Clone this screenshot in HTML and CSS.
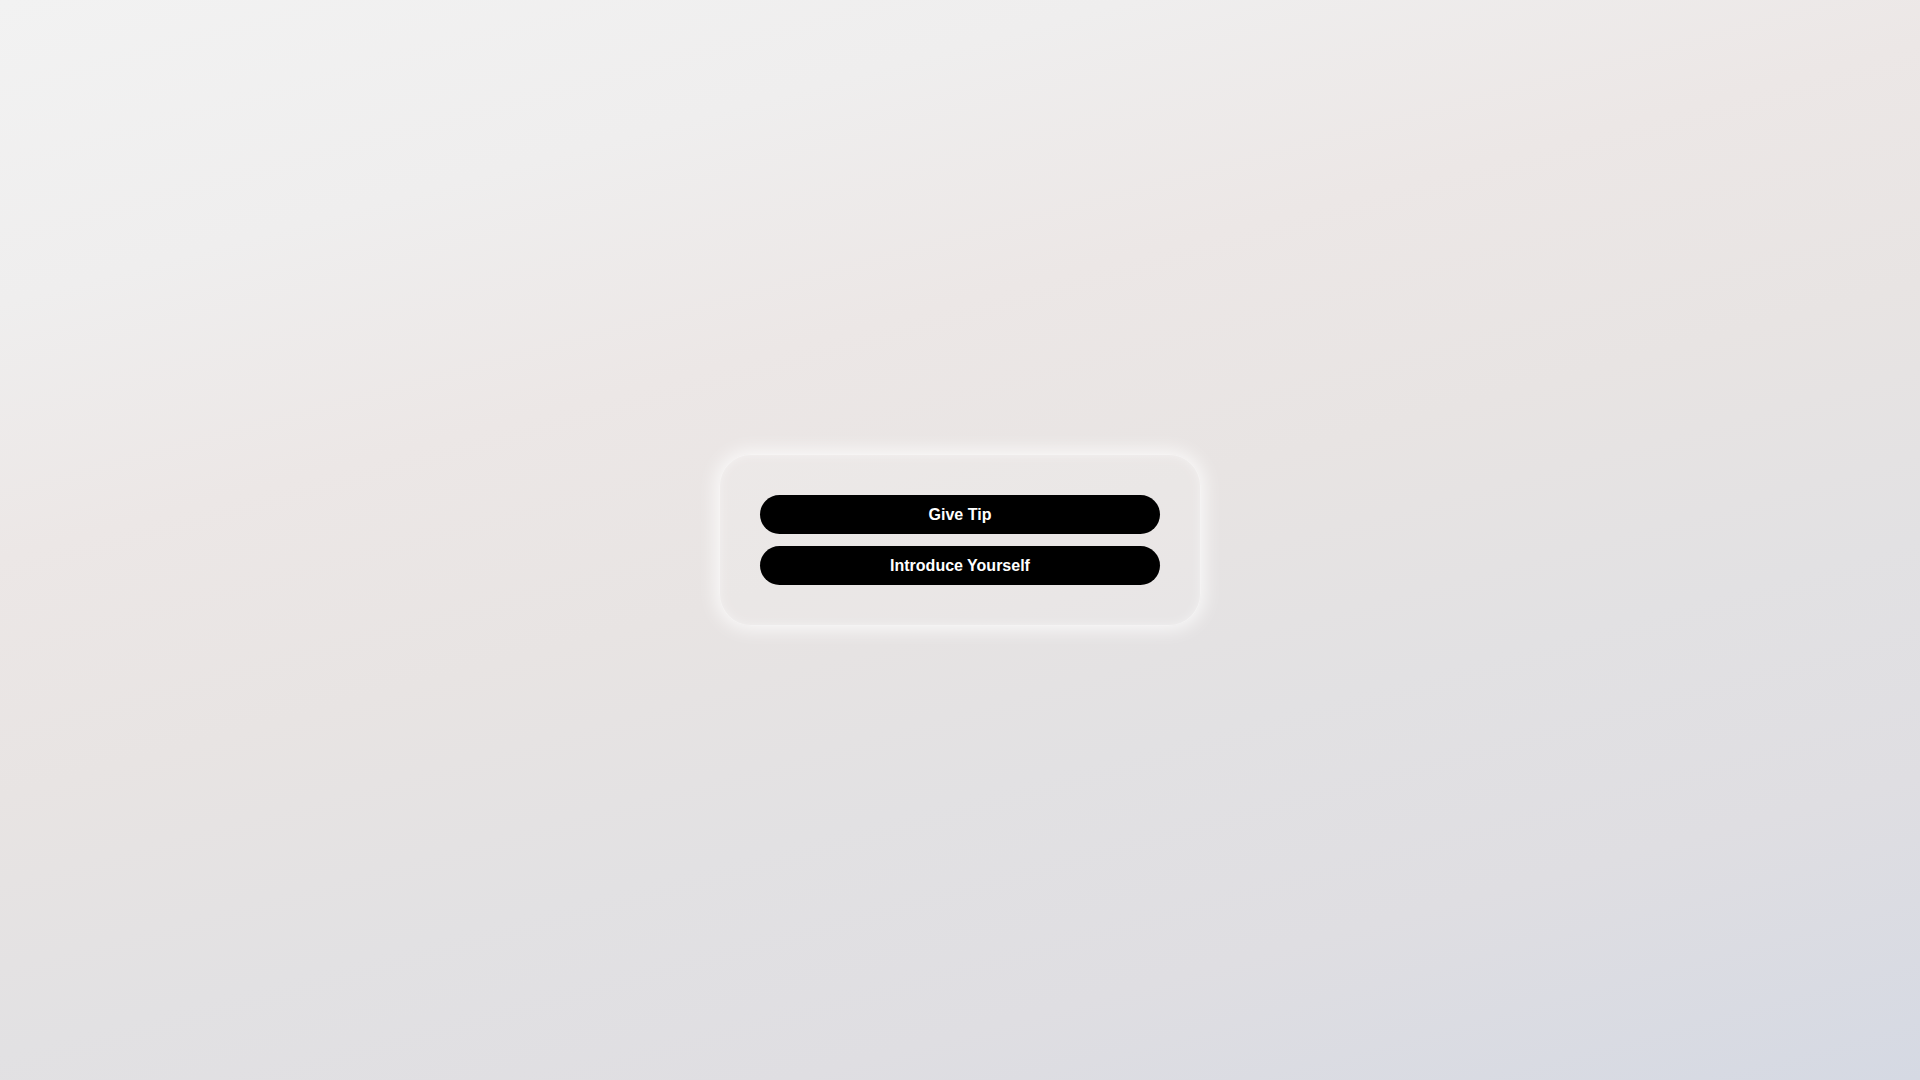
FILE: index.html
```html
<!DOCTYPE html>
<html lang="en">
<head>
<meta charset="utf-8">
<title>Actions</title>
<link rel="stylesheet" href="styles.css">
</head>
<body>
<main class="page">
  <section class="card">
    <button class="pill">Give Tip</button>
    <button class="pill">Introduce Yourself</button>
  </section>
</main>
</body>
</html>
```

FILE: styles.css
```css
html, body {
  margin: 0;
  padding: 0;
  height: 100%;
}
body {
  font-family: "Liberation Sans", Arial, sans-serif;
  background: linear-gradient(165deg, #f2f2f2 0%, #efeeee 19%, #ece7e6 35%, #e8e4e3 50%, #e2e1e3 66%, #dfdee2 81%, #d5d9e3 100%);
}
.page {
  height: 100vh;
  display: flex;
  align-items: center;
  justify-content: center;
}
.card {
  width: 400px;
  padding: 40px;
  display: flex;
  flex-direction: column;
  gap: 12px;
  border-radius: 32px;
  background: rgba(255, 255, 255, 0.12);
  border: 1px solid rgba(255, 255, 255, 0.5);
  box-shadow: 0 0 18px 4px rgba(255, 255, 255, 0.75), inset 0 0 10px rgba(255, 255, 255, 0.4);
  box-sizing: content-box;
}
.pill {
  height: 39px;
  border: none;
  border-radius: 20px;
  background: #000;
  color: #fff;
  font-family: "Liberation Sans", Arial, sans-serif;
  font-size: 16px;
  font-weight: bold;
  padding: 0;
  cursor: pointer;
}
```
